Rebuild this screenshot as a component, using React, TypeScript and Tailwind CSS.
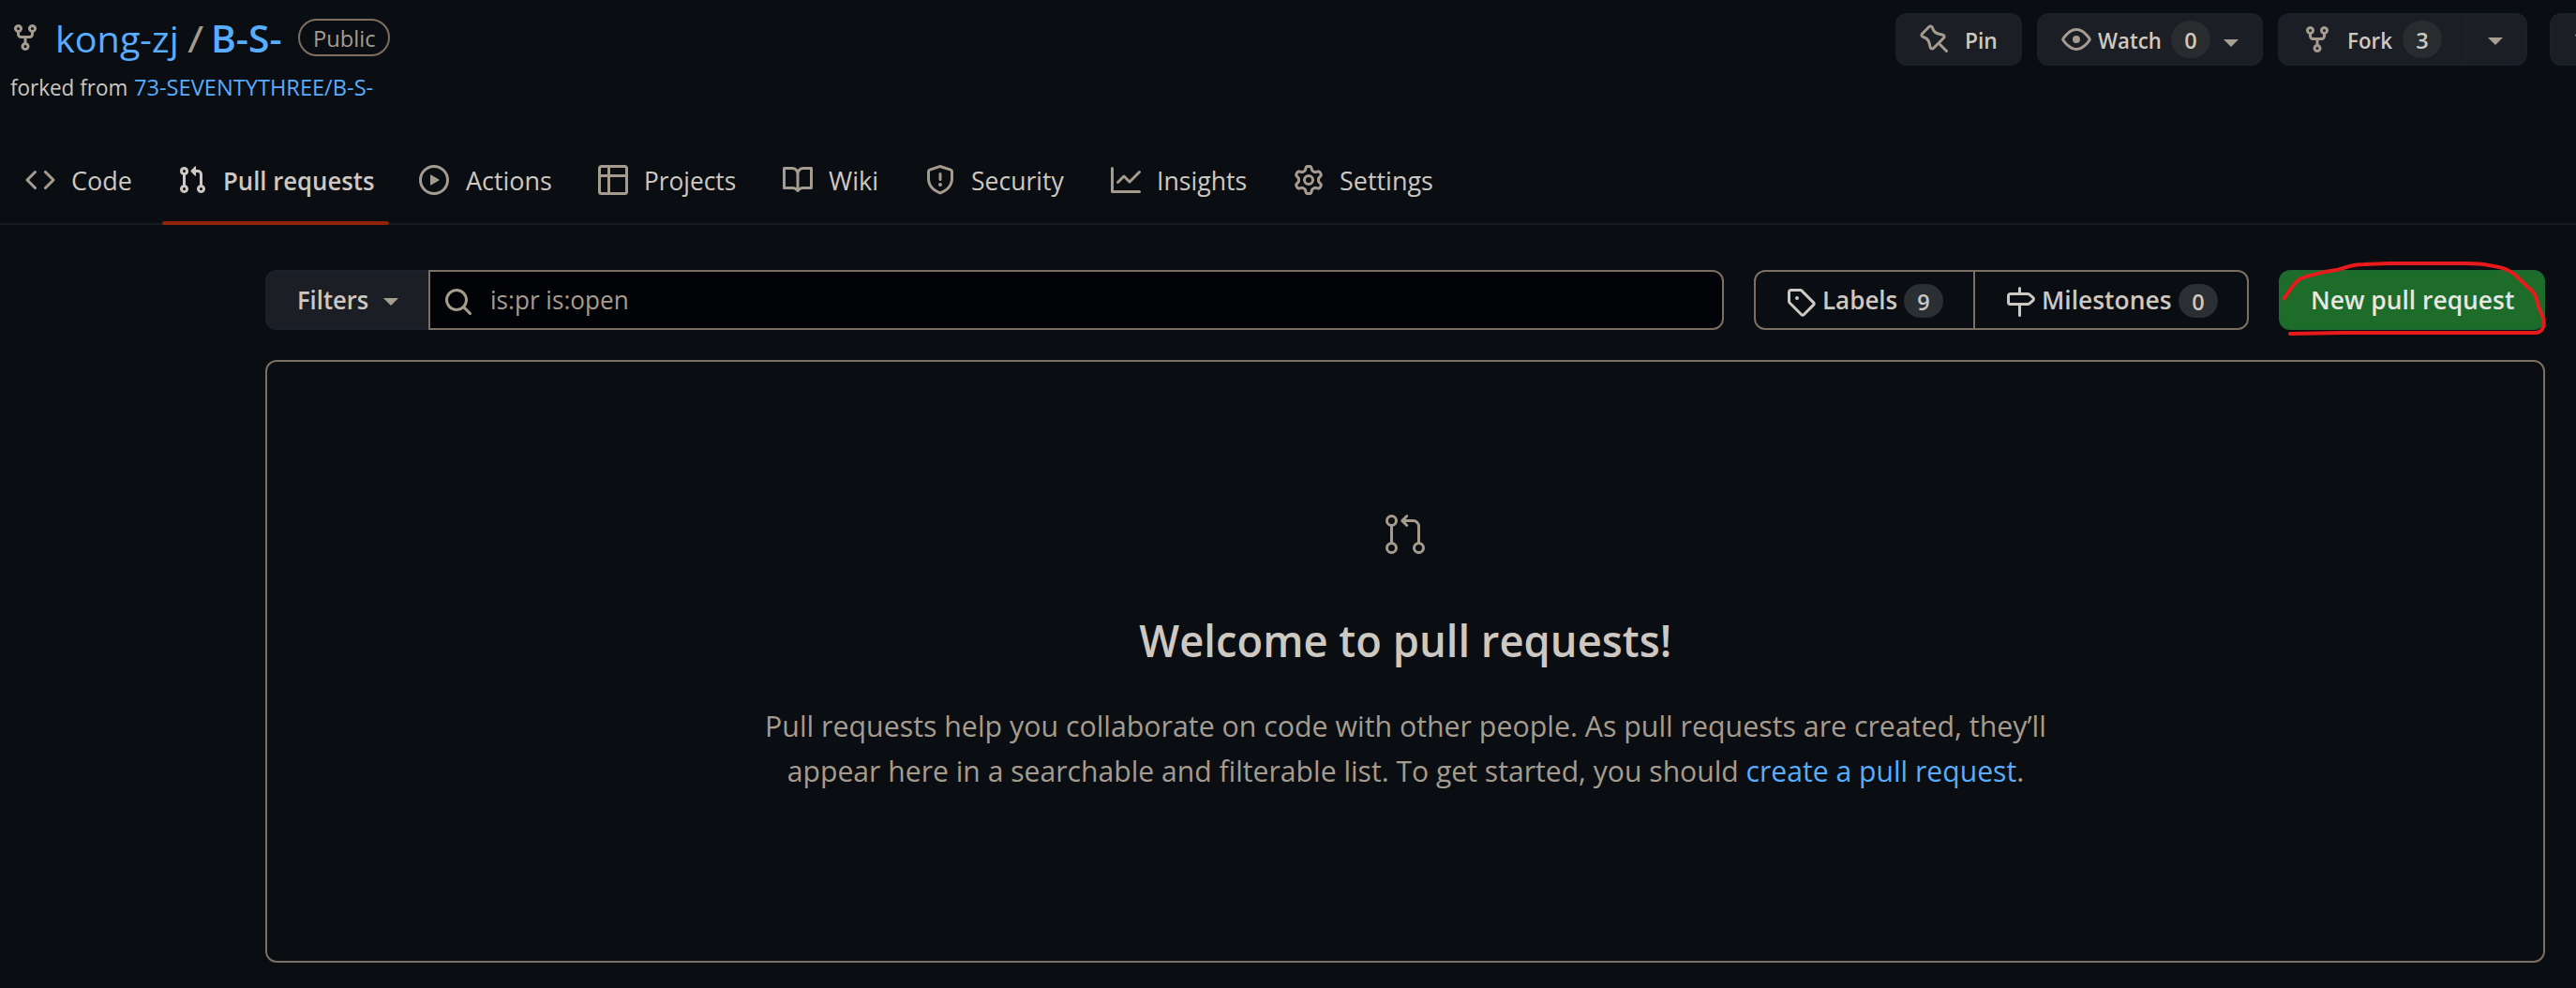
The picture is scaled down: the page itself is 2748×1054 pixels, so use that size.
import React from 'react';

const paths = {
  fork: 'M5 3.25a.75.75 0 11-1.5 0 .75.75 0 011.5 0zm0 2.122a2.25 2.25 0 10-1.5 0v.878A2.25 2.25 0 005.75 8.5h1.5v2.128a2.251 2.251 0 101.5 0V8.5h1.5a2.25 2.25 0 002.25-2.25v-.878a2.25 2.25 0 10-1.5 0v.878a.75.75 0 01-.75.75h-4.5A.75.75 0 015 6.25v-.878zm3.75 7.378a.75.75 0 11-1.5 0 .75.75 0 011.5 0zm3-8.75a.75.75 0 100-1.5.75.75 0 000 1.5z',
  code: 'M4.72 3.22a.75.75 0 011.06 1.06L2.06 8l3.72 3.72a.75.75 0 11-1.06 1.06L.47 8.53a.75.75 0 010-1.06l4.25-4.25zm6.56 0a.75.75 0 10-1.06 1.06L13.94 8l-3.72 3.72a.75.75 0 101.06 1.06l4.25-4.25a.75.75 0 000-1.06l-4.25-4.25z',
  pull: 'M7.177 3.073L9.573.677A.25.25 0 0110 .854v4.792a.25.25 0 01-.427.177L7.177 3.427a.25.25 0 010-.354zM3.75 2.5a.75.75 0 100 1.5.75.75 0 000-1.5zm-2.25.75a2.25 2.25 0 113 2.122v5.256a2.251 2.251 0 11-1.5 0V5.372A2.25 2.25 0 011.5 3.25zM11 2.5h-1V4h1a1 1 0 011 1v5.628a2.251 2.251 0 101.5 0V5A2.5 2.5 0 0011 2.5zm1 10.25a.75.75 0 111.5 0 .75.75 0 01-1.5 0zM3.75 12a.75.75 0 100 1.5.75.75 0 000-1.5z',
  play: 'M1.5 8a6.5 6.5 0 1113 0 6.5 6.5 0 01-13 0zM8 0a8 8 0 100 16A8 8 0 008 0zM6.379 5.227A.25.25 0 006 5.442v5.117a.25.25 0 00.379.214l4.264-2.559a.25.25 0 000-.428L6.379 5.227z',
  table: 'M0 1.75C0 .784.784 0 1.75 0h12.5C15.216 0 16 .784 16 1.75v3.585a.746.746 0 010 .83v8.085A1.75 1.75 0 0114.25 16H6.309a.748.748 0 01-1.118 0H1.75A1.75 1.75 0 010 14.25V6.165a.746.746 0 010-.83V1.75zM1.5 6.5v7.75c0 .138.112.25.25.25H5v-8H1.5zM5 5H1.5V1.75a.25.25 0 01.25-.25H5V5zm1.5 1.5v8h7.75a.25.25 0 00.25-.25V6.5h-8zm8-1.5h-8V1.5h7.75a.25.25 0 01.25.25V5z',
  book: 'M0 1.75A.75.75 0 01.75 1h4.253c1.227 0 2.317.59 3 1.501A3.744 3.744 0 0111.006 1h4.245a.75.75 0 01.75.75v10.5a.75.75 0 01-.75.75h-4.507a2.25 2.25 0 00-1.591.659l-.622.621a.75.75 0 01-1.06 0l-.622-.621A2.25 2.25 0 005.258 13H.75a.75.75 0 01-.75-.75V1.75zm8.755 3a2.25 2.25 0 012.25-2.25H14.5v9h-3.757c-.71 0-1.4.201-1.992.572l.004-7.322zm-1.504 7.324l.004-5.073-.002-2.253A2.25 2.25 0 005.003 2.5H1.5v9h3.757a3.75 3.75 0 011.994.574z',
  shield: 'M7.467.133a1.75 1.75 0 011.066 0l5.25 1.68A1.75 1.75 0 0115 3.48V7c0 1.566-.32 3.182-1.303 4.682-.983 1.498-2.585 2.813-5.032 3.855a1.7 1.7 0 01-1.33 0c-2.447-1.042-4.049-2.357-5.032-3.855C1.32 10.182 1 8.566 1 7V3.48a1.75 1.75 0 011.217-1.667l5.25-1.68zm.61 1.429a.25.25 0 00-.153 0l-5.25 1.68a.25.25 0 00-.174.238V7c0 1.358.275 2.666 1.057 3.86.784 1.194 2.121 2.34 4.366 3.297a.2.2 0 00.154 0c2.245-.956 3.582-2.104 4.366-3.298C13.225 9.666 13.5 8.36 13.5 7V3.48a.25.25 0 00-.174-.237l-5.25-1.68zM9 10.5a1 1 0 11-2 0 1 1 0 012 0zm-.25-5.75a.75.75 0 10-1.5 0v3a.75.75 0 001.5 0v-3z',
  graph: 'M1.5 1.75a.75.75 0 00-1.5 0v12.5c0 .414.336.75.75.75h14.5a.75.75 0 000-1.5H1.5V1.75zm14.28 2.53a.75.75 0 00-1.06-1.06L10 7.94 7.53 5.47a.75.75 0 00-1.06 0L3.22 8.72a.75.75 0 001.06 1.06L7 7.06l2.47 2.47a.75.75 0 001.06 0l5.25-5.25z',
  gear: 'M7.429 1.525a6.593 6.593 0 011.142 0c.036.003.108.036.137.146l.289 1.105c.147.56.55.967.997 1.189.174.086.341.183.501.29.417.278.97.423 1.53.27l1.102-.303c.11-.03.175.016.195.046.219.31.41.641.573.989.014.031.022.11-.059.19l-.815.806c-.411.406-.562.957-.53 1.456a4.588 4.588 0 010 .582c-.032.499.119 1.05.53 1.456l.815.806c.08.08.073.159.059.19a6.494 6.494 0 01-.573.99c-.02.029-.086.074-.195.045l-1.103-.303c-.559-.153-1.112-.008-1.529.27-.16.107-.327.204-.5.29-.449.222-.851.628-.998 1.189l-.289 1.105c-.029.11-.101.143-.137.146a6.613 6.613 0 01-1.142 0c-.036-.003-.108-.037-.137-.146l-.289-1.105c-.147-.56-.55-.967-.997-1.189a4.502 4.502 0 01-.501-.29c-.417-.278-.97-.423-1.53-.27l-1.102.303c-.11.03-.175-.016-.195-.046a6.492 6.492 0 01-.573-.989c-.014-.031-.022-.11.059-.19l.815-.806c.411-.406.562-.957.53-1.456a4.587 4.587 0 010-.582c.032-.499-.119-1.05-.53-1.456l-.815-.806c-.08-.08-.073-.159-.059-.19a6.44 6.44 0 01.573-.99c.02-.029.086-.075.195-.045l1.103.303c.559.153 1.112.008 1.529-.27.16-.107.327-.204.5-.29.449-.222.851-.628.998-1.189l.289-1.105c.029-.11.101-.143.137-.146zM8 0c-.236 0-.47.01-.701.03-.743.065-1.29.615-1.458 1.261l-.29 1.106c-.017.066-.078.158-.211.224a5.994 5.994 0 00-.668.386c-.123.082-.233.09-.3.071L3.27 2.776c-.644-.177-1.392.02-1.82.63a7.977 7.977 0 00-.704 1.217c-.315.675-.111 1.422.363 1.891l.815.806c.05.048.098.147.088.294a6.084 6.084 0 000 .772c.01.147-.038.246-.088.294l-.815.806c-.474.469-.678 1.216-.363 1.891.2.428.436.835.704 1.218.428.609 1.176.806 1.82.63l1.103-.303c.066-.019.176-.011.299.071.213.143.436.272.668.386.133.066.194.158.212.224l.289 1.106c.169.646.715 1.196 1.458 1.26a8.094 8.094 0 001.402 0c.743-.064 1.29-.614 1.458-1.26l.29-1.106c.017-.066.078-.158.211-.224a5.98 5.98 0 00.668-.386c.123-.082.233-.09.3-.071l1.102.302c.644.177 1.392-.02 1.82-.63.268-.382.505-.789.704-1.217.315-.675.111-1.422-.364-1.891l-.814-.806c-.05-.048-.098-.147-.088-.294a6.1 6.1 0 000-.772c-.01-.147.039-.246.088-.294l.814-.806c.475-.469.679-1.216.364-1.891a7.992 7.992 0 00-.704-1.218c-.428-.609-1.176-.806-1.82-.63l-1.103.303c-.066.019-.176.011-.299-.071a5.991 5.991 0 00-.668-.386c-.133-.066-.194-.158-.212-.224L10.16 1.29C9.99.645 9.444.095 8.701.031A8.094 8.094 0 008 0zm1.5 8a1.5 1.5 0 11-3 0 1.5 1.5 0 013 0zM11 8a3 3 0 11-6 0 3 3 0 016 0z',
  pin: 'M4.456.734a1.75 1.75 0 012.826.504l.613 1.327a3.081 3.081 0 002.084 1.707l2.454.584c1.332.317 1.8 1.972.832 2.94L11.06 10l3.72 3.72a.75.75 0 11-1.061 1.06L10 11.06l-2.204 2.205c-.968.968-2.623.5-2.94-.832l-.584-2.454a3.081 3.081 0 00-1.707-2.084l-1.327-.613a1.75 1.75 0 01-.504-2.826L4.456.734zM5.92 1.866a.25.25 0 00-.404-.072L1.794 5.516a.25.25 0 00.072.404l1.328.613A4.582 4.582 0 015.73 9.63l.584 2.454a.25.25 0 00.42.12l5.47-5.47a.25.25 0 00-.12-.42L9.63 5.73a4.581 4.581 0 01-3.098-2.537L5.92 1.866z',
  eye: 'M1.679 7.932c.412-.621 1.242-1.75 2.366-2.717C5.175 4.242 6.527 3.5 8 3.5c1.473 0 2.824.742 3.955 1.715 1.124.967 1.954 2.096 2.366 2.717a.119.119 0 010 .136c-.412.621-1.242 1.75-2.366 2.717C10.825 11.758 9.473 12.5 8 12.5c-1.473 0-2.824-.742-3.955-1.715C2.92 9.818 2.09 8.69 1.679 8.068a.119.119 0 010-.136zM8 2c-1.981 0-3.67.992-4.933 2.078C1.797 5.169.88 6.423.43 7.1a1.619 1.619 0 000 1.798c.45.678 1.367 1.932 2.637 3.024C4.329 13.008 6.019 14 8 14c1.981 0 3.67-.992 4.933-2.078 1.27-1.091 2.187-2.345 2.637-3.023a1.619 1.619 0 000-1.798c-.45-.678-1.367-1.932-2.637-3.023C11.671 2.992 9.981 2 8 2zm0 8a2 2 0 100-4 2 2 0 000 4z',
  search: 'M11.5 7a4.499 4.499 0 11-8.998 0A4.499 4.499 0 0111.5 7zm-.82 4.74a6 6 0 111.06-1.06l3.04 3.04a.75.75 0 11-1.06 1.06l-3.04-3.04z',
  tag: 'M2.5 7.775V2.75a.25.25 0 01.25-.25h5.025a.25.25 0 01.177.073l6.25 6.25a.25.25 0 010 .354l-5.025 5.025a.25.25 0 01-.354 0l-6.25-6.25a.25.25 0 01-.073-.177zm-1.5 0V2.75C1 1.784 1.784 1 2.75 1h5.025c.464 0 .91.184 1.238.513l6.25 6.25a1.75 1.75 0 010 2.474l-5.026 5.026a1.75 1.75 0 01-2.474 0l-6.25-6.25A1.75 1.75 0 011 7.775zM6 5a1 1 0 100 2 1 1 0 000-2z',
  milestone: 'M7.75 0a.75.75 0 01.75.75V3h3.634c.414 0 .814.147 1.13.414l2.07 1.75a1.75 1.75 0 010 2.672l-2.07 1.75a1.75 1.75 0 01-1.13.414H8.5v5.25a.75.75 0 11-1.5 0V10H2.75A1.75 1.75 0 011 8.25v-3.5C1 3.784 1.784 3 2.75 3H7V.75A.75.75 0 017.75 0zm0 8.5h4.384a.25.25 0 00.161-.06l2.07-1.75a.25.25 0 000-.38l-2.07-1.75a.25.25 0 00-.161-.06H2.75a.25.25 0 00-.25.25v3.5c0 .138.112.25.25.25h5z',
  star: 'M8 .25a.75.75 0 01.673.418l1.882 3.815 4.21.612a.75.75 0 01.416 1.279l-3.046 2.97.719 4.192a.75.75 0 01-1.088.791L8 12.347l-3.766 1.98a.75.75 0 01-1.088-.79l.72-4.194L.818 6.374a.75.75 0 01.416-1.28l4.21-.611L7.327.668A.75.75 0 018 .25z',
};

function Icon({ name, className = '' }: { name: keyof typeof paths; className?: string }) {
  return (
    <svg viewBox="0 0 16 16" className={`size-8 shrink-0 fill-current ${className}`} aria-hidden="true">
      <path fillRule="evenodd" d={paths[name]} />
    </svg>
  );
}

/* Single-line text in a fixed-width slot; `fit` condenses the glyphs horizontally. */
function Label({ children, slot, fit }: { children: React.ReactNode; slot: string; fit: string }) {
  return (
    <span className={`block shrink-0 pl-px ${slot}`}>
      <span className={`block w-max origin-left whitespace-nowrap ${fit}`}>{children}</span>
    </span>
  );
}

function Caret({ className = '' }: { className?: string }) {
  return (
    <span
      className={`block size-0 shrink-0 border-x-8 border-t-8 border-x-transparent border-t-[#a89f93] ${className}`}
    />
  );
}

const tabs: { icon: keyof typeof paths; label: string; slot: string; fit: string; active?: boolean }[] = [
  { icon: 'code', label: 'Code', slot: 'w-[66px]', fit: 'scale-x-[0.98]' },
  { icon: 'pull', label: 'Pull requests', slot: 'w-[162px]', fit: 'scale-x-[0.935]', active: true },
  { icon: 'play', label: 'Actions', slot: 'w-[95px]', fit: 'scale-x-[0.98] translate-x-px' },
  { icon: 'table', label: 'Projects', slot: 'w-[101px]', fit: 'scale-x-[0.955]' },
  { icon: 'book', label: 'Wiki', slot: 'w-14', fit: 'scale-x-[0.99]' },
  { icon: 'shield', label: 'Security', slot: 'w-[102px]', fit: 'scale-x-[0.965]' },
  { icon: 'graph', label: 'Insights', slot: 'w-[99px]', fit: 'scale-x-[0.97]' },
  { icon: 'gear', label: 'Settings', slot: 'w-[103px]', fit: 'scale-x-[0.98]' },
];

const topButton = 'flex h-14 shrink-0 items-center border-2 border-[#19212b] bg-[#1b1e25] text-[23.5px] font-semibold';

export default function App() {
  return (
    <div className="flex h-[1054px] w-[2748px] flex-col overflow-hidden bg-[#0a0d11] font-['Open_Sans',sans-serif] text-[#cdc8c2]">
      <header className="flex h-[72px] shrink-0 justify-between">
        <div className="flex h-20 items-center pl-[11px] text-[39.2px] leading-[48px] text-[#58adff]">
          <Icon name="fork" className="text-[#a59c8f]" />
          <div className="ml-[14px] flex pt-0.5">
            <Label slot="w-[142px]" fit="scale-x-[1.01] translate-x-px">kong-zj</Label>
            <Label slot="w-[25px] text-[#a59c8f]" fit="scale-x-[1.2]">/</Label>
            <Label slot="w-[94px] font-semibold" fit="scale-x-[1.04]">B-S-</Label>
          </div>
          <div className="flex h-10 w-[98px] items-center rounded-full border-2 border-[#7b6e62] pt-px pl-[13px] text-[23.5px] leading-8 font-medium text-[#a59c8f]">
            <Label slot="w-[66px]" fit="scale-x-[1.01]">Public</Label>
          </div>
        </div>

        <div className="flex w-[726px] shrink-0 pt-[14px] leading-[34px]">
          <div className={`${topButton} mr-4 w-[135px] rounded-xl pl-6`}>
            <Icon name="pin" className="text-[#a59c8f]" />
            <div className="ml-[15px] pt-0.5">
              <Label slot="w-9" fit="scale-x-[0.97]">Pin</Label>
            </div>
          </div>
          <div className={`${topButton} mr-4 w-[241px] rounded-xl pl-6`}>
            <Icon name="eye" className="text-[#a59c8f]" />
            <div className="ml-[6px] pt-0.5">
              <Label slot="w-[79px]" fit="scale-x-[0.945]">Watch</Label>
            </div>
            <span className="flex h-10 w-[42px] items-center justify-center rounded-full bg-[#292c2e] pt-0.5">0</span>
            <Caret className="mt-2 ml-[14px]" />
          </div>
          <div className={`${topButton} w-[200px] rounded-l-xl border-r-0 pl-6`}>
            <Icon name="fork" className="text-[#a59c8f]" />
            <div className="ml-[15px] pt-0.5">
              <Label slot="w-[60px]" fit="scale-x-[0.95]">Fork</Label>
            </div>
            <span className="flex h-10 w-[42px] items-center justify-center rounded-full bg-[#292c2e] pt-0.5">3</span>
          </div>
          <div className={`${topButton} mr-6 w-[66px] rounded-r-xl pl-[22px]`}>
            <Caret className="mt-1" />
          </div>
          <div className={`${topButton} w-[140px] rounded-xl pl-6`}>
            <Icon name="star" className="text-[#a59c8f]" />
          </div>
        </div>
      </header>

      <div className="mt-[3px] flex h-9 shrink-0 pl-[10px] text-[23.5px] leading-9">
        <Label slot="w-[132px]" fit="scale-x-[0.955]">forked from</Label>
        <div className="text-[#58adff]">
          <Label slot="w-[260px]" fit="scale-x-[1.005]">73-SEVENTYTHREE/B-S-</Label>
        </div>
      </div>

      <nav className="mt-[33px] flex h-24 shrink-0 gap-4 border-b-2 border-[#181b20] pl-[11px] text-[27.5px] leading-[42px]">
        {tabs.map((t) => (
          <div key={t.label} className="relative flex h-24 items-center gap-4 px-4">
            <Icon name={t.icon} className={t.active ? 'text-[#cdc8c2]' : 'text-[#a59c8f]'} />
            <div className={t.active ? 'pt-px font-semibold' : 'pt-px'}>
              <Label slot={t.slot} fit={t.fit}>{t.label}</Label>
            </div>
            {t.active && <span className="absolute inset-x-0 bottom-0 h-1 rounded-sm bg-[#8f2208]" />}
          </div>
        ))}
      </nav>

      <main className="mt-12 mr-[33px] ml-[283px] flex flex-col text-[27.5px] leading-[42px]">
        <div className="flex h-16">
          <div className="flex w-[174px] items-center rounded-l-xl border-2 border-r-0 border-[#19212b] bg-[#1b1e25] pl-[31px] font-semibold">
            <Label slot="w-[93px]" fit="scale-x-[0.93]">Filters</Label>
            <Caret className="mt-1" />
          </div>
          <div className="mr-8 flex w-[1382px] items-center rounded-r-xl border-2 border-[#7b6e62] bg-[#020306] pl-[14px] text-[#a59c8f]">
            <Icon name="search" className="mt-1" />
            <div className="ml-[17px]">
              <Label slot="w-[200px]" fit="scale-x-[0.95]">is:pr is:open</Label>
            </div>
          </div>
          <div className="mr-8 flex w-[528px] rounded-xl border-2 border-[#7b6e62] font-semibold">
            <div className="flex w-[234px] items-center border-r-2 border-[#7b6e62] pl-8">
              <Icon name="tag" className="mt-1" />
              <div className="ml-[6px]">
                <Label slot="w-[88px]" fit="scale-x-[0.945]">Labels</Label>
              </div>
              <span className="mt-0.5 flex h-9 w-[42px] items-center justify-center rounded-full bg-[#2a2f34] pt-0.5 text-[23.5px]">9</span>
            </div>
            <div className="flex items-center pl-8">
              <Icon name="milestone" className="mt-1" />
              <div className="ml-[6px]">
                <Label slot="w-[147px]" fit="scale-x-[0.96]">Milestones</Label>
              </div>
              <span className="mt-0.5 flex h-9 w-[42px] items-center justify-center rounded-full bg-[#2a2f34] pt-0.5 text-[23.5px]">0</span>
            </div>
          </div>
          <div className="relative flex w-[284px] items-center rounded-xl border-2 border-[#1b6a32] bg-[#1d6c2a] pl-[31px] font-semibold text-[#e8e6e3]">
            <Label slot="w-[222px]" fit="scale-x-[0.96]">New pull request</Label>
            <svg
              viewBox="423 54 861 246"
              className="absolute -top-3 -left-0.5 h-[82px] w-[287px] fill-none stroke-[#e81a1c] stroke-[12]"
              strokeLinecap="round"
              strokeLinejoin="round"
              aria-hidden="true"
            >
              <path d="M440 175Q470 128 487 115Q505 105 538 98L575 89L612 83L650 72Q670 66 695 66L780 63H1020Q1070 63 1100 70Q1140 76 1160 87Q1175 94 1190 110L1235 153Q1243 160 1247 175L1255 203L1268 235Q1276 262 1265 275Q1258 285 1242 285H630L459 288" />
            </svg>
          </div>
        </div>

        <section className="mt-8 flex h-[643px] flex-col items-center rounded-xl border-2 border-[#7b6e62] pt-40">
          <svg viewBox="0 0 24 24" className="size-12 shrink-0 fill-[#a59c8f]" aria-hidden="true">
            <path d="M16 19.25a3.25 3.25 0 1 1 6.5 0 3.25 3.25 0 0 1-6.5 0Zm-14.5 0a3.25 3.25 0 1 1 6.5 0 3.25 3.25 0 0 1-6.5 0Zm0-14.5a3.25 3.25 0 1 1 6.5 0 3.25 3.25 0 0 1-6.5 0ZM4.75 3a1.75 1.75 0 1 0 .001 3.501A1.75 1.75 0 0 0 4.75 3Zm0 14.5a1.75 1.75 0 1 0 .001 3.501A1.75 1.75 0 0 0 4.75 17.5Zm14.5 0a1.75 1.75 0 1 0 .001 3.501 1.75 1.75 0 0 0-.001-3.501Z" />
            <path d="M13.405 1.72a.75.75 0 0 1 0 1.06L12.185 4h4.065A3.75 3.75 0 0 1 20 7.75v8.75a.75.75 0 0 1-1.5 0V7.75a2.25 2.25 0 0 0-2.25-2.25h-4.064l1.22 1.22a.75.75 0 0 1-1.061 1.06l-2.5-2.5a.75.75 0 0 1 0-1.06l2.5-2.5a.75.75 0 0 1 1.06 0ZM4.75 7.25A.75.75 0 0 1 5.5 8v8A.75.75 0 0 1 4 16V8a.75.75 0 0 1 .75-.75Z" />
          </svg>
          <h1 className="mt-[53px] w-max origin-center scale-x-[0.965] text-[47px] leading-[72px] font-semibold whitespace-nowrap">
            Welcome to pull requests!
          </h1>
          <p className="mt-[31px] w-max origin-center text-center text-[31.4px] leading-[48px] whitespace-nowrap text-[#a59c8f]">
            <span className="block scale-x-[0.966]">
              Pull requests help you collaborate on code with other people. As pull requests are created, they’ll
            </span>
            <span className="block scale-x-[0.96]">
              appear here in a searchable and filterable list. To get started, you should{' '}
              <a className="text-[#58adff]">create a pull request</a>.
            </span>
          </p>
        </section>
      </main>
    </div>
  );
}
